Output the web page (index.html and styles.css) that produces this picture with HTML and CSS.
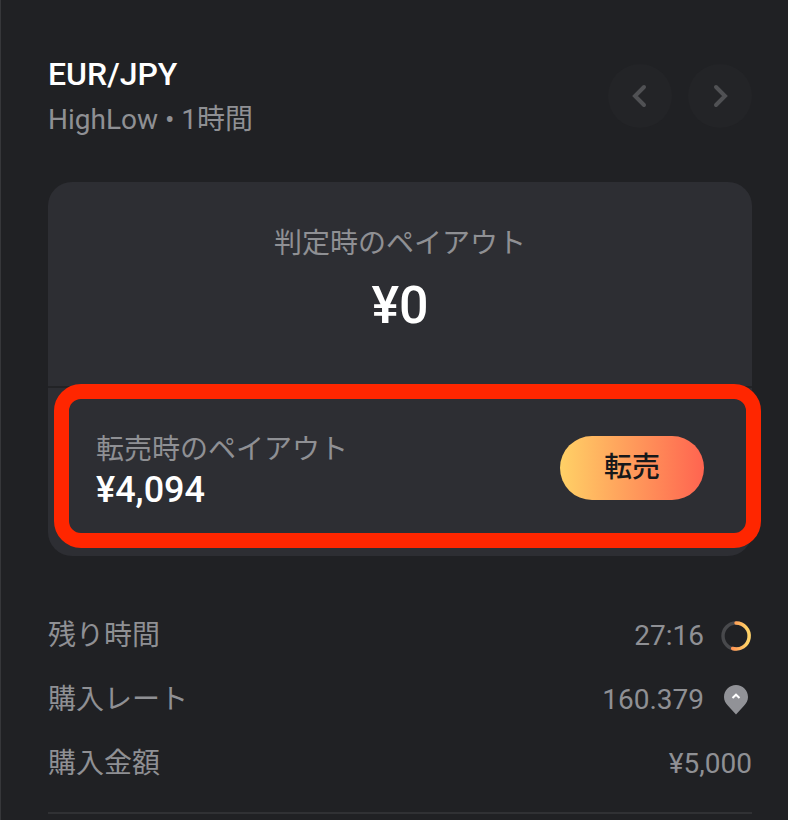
FILE: index.html
```
<!DOCTYPE html>
<html lang="ja">
<head>
  <meta charset="UTF-8">
  <meta name="viewport" content="width=device-width, initial-scale=1.0">
  <title>EUR/JPY - HighLow</title>
  <link rel="stylesheet" href="styles.css">
</head>
<body>
  <main class="trade">
    <header class="trade-header">
      <div>
        <h1 class="pair">EUR/JPY</h1>
        <p class="mode">HighLow • 1時間</p>
      </div>
      <nav class="pager">
        <button class="pager-btn" type="button" aria-label="前へ">
          <svg width="16" height="24" viewBox="0 0 16 24" fill="none" stroke="currentColor" stroke-width="4" stroke-linecap="round"><path d="M12 3 L3 12 L12 21"/></svg>
        </button>
        <button class="pager-btn" type="button" aria-label="次へ">
          <svg width="16" height="24" viewBox="0 0 16 24" fill="none" stroke="currentColor" stroke-width="4" stroke-linecap="round"><path d="M4 3 L13 12 L4 21"/></svg>
        </button>
      </nav>
    </header>

    <section class="card">
      <div class="payout">
        <p class="label">判定時のペイアウト</p>
        <p class="payout-value">¥0</p>
      </div>
      <div class="resale">
        <div>
          <p class="label">転売時のペイアウト</p>
          <p class="resale-value">¥4,094</p>
        </div>
        <button class="resale-btn" type="button">転売</button>
        <div class="highlight"></div>
      </div>
    </section>

    <dl class="details">
      <div class="row">
        <dt>残り時間</dt>
        <dd>27:16
          <svg class="icon" width="32" height="32" viewBox="0 0 32 32" fill="none" stroke-width="3.4">
            <defs>
              <linearGradient id="ring" gradientUnits="userSpaceOnUse" x1="10" y1="0" x2="27" y2="0">
                <stop offset="0" stop-color="#ff8a50"/>
                <stop offset="1" stop-color="#ffd166"/>
              </linearGradient>
            </defs>
            <circle cx="16" cy="16" r="13" stroke="#48494c"/>
            <path d="M16 3 A13 13 0 1 1 12.6 28.5" stroke="url(#ring)" stroke-linecap="round"/>
          </svg>
        </dd>
      </div>
      <div class="row">
        <dt>購入レート</dt>
        <dd>160.379
          <svg class="icon" width="32" height="32" viewBox="0 0 32 32">
            <path d="M16 1 C9.4 1 4 6.2 4 13 C4 16.5 5.6 19.3 8 21.7 L16 30.5 L24 21.7 C26.4 19.3 28 16.5 28 13 C28 6.2 22.6 1 16 1 Z" fill="#919297"/>
            <path d="M12.5 14 L16 10.7 L19.5 14" fill="none" stroke="#fff" stroke-width="2"/>
          </svg>
        </dd>
      </div>
      <div class="row">
        <dt>購入金額</dt>
        <dd>¥5,000</dd>
      </div>
    </dl>
  </main>
</body>
</html>
```
FILE: styles.css
```
* {
  box-sizing: border-box;
}
body {
  margin: 0;
  min-height: 100vh;
  background: #202124;
  border-left: 1px solid #36373a;
  color: #8f9094;
  font-family: Roboto, "Noto Sans CJK JP", sans-serif;
  font-size: 28px;
  line-height: 44px;
}
h1, p, dl, dd {
  margin: 0;
}
.trade {
  padding: 50px 36px 0 47px;
}
.trade-header {
  display: flex;
  justify-content: space-between;
  align-items: center;
  margin-bottom: 40px;
}
.pair {
  color: #fff;
  font-size: 32px;
  font-weight: 500;
  line-height: 48px;
}
.pager {
  display: flex;
  gap: 16px;
}
.pager-btn {
  display: flex;
  align-items: center;
  justify-content: center;
  width: 64px;
  height: 64px;
  padding: 0;
  border: 0;
  border-radius: 50%;
  background: #232427;
  color: #505154;
}
.card {
  border-radius: 24px;
  background: #2d2e33;
}
.payout {
  padding: 40px 24px 48px;
  text-align: center;
  border-bottom: 2px solid #222326;
}
.payout-value {
  margin-top: 8px;
  color: #fff;
  font-size: 52px;
  font-weight: 500;
  line-height: 64px;
}
.resale {
  position: relative;
  display: flex;
  justify-content: space-between;
  align-items: center;
  padding: 40px 48px 48px;
}
.resale-value {
  color: #fff;
  font-size: 36px;
  font-weight: 500;
  line-height: 36px;
}
.resale-btn {
  width: 144px;
  height: 64px;
  padding: 0;
  border: 0;
  border-radius: 32px;
  background: linear-gradient(90deg, #ffd166, #ff6450);
  color: #17181a;
  font: inherit;
  font-weight: 500;
}
/* marker frame around the resale row */
.highlight {
  position: absolute;
  inset: -4px -9px 8px 6px;
  border: 15px solid #ff2600;
  border-radius: 27px;
  pointer-events: none;
}
.details {
  margin-top: 48px;
  padding-bottom: 16px;
  border-bottom: 2px solid #303134;
}
.row {
  display: flex;
  justify-content: space-between;
  align-items: center;
  height: 64px;
}
.row dd {
  display: flex;
  align-items: center;
  gap: 16px;
}
```
